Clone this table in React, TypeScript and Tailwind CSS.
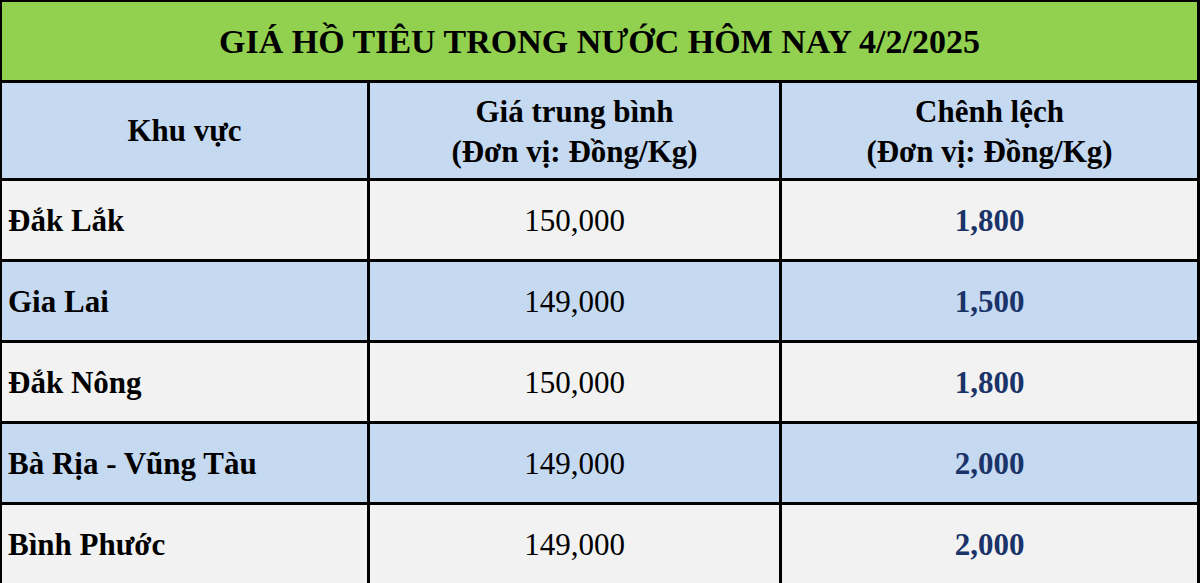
const ROWS = [
  { region: "Đắk Lắk", price: "150,000", diff: "1,800" },
  { region: "Gia Lai", price: "149,000", diff: "1,500" },
  { region: "Đắk Nông", price: "150,000", diff: "1,800" },
  { region: "Bà Rịa - Vũng Tàu", price: "149,000", diff: "2,000" },
  { region: "Bình Phước", price: "149,000", diff: "2,000" },
];

export default function App() {
  return (
    <div
      className="w-[1200px] h-[583px] overflow-hidden bg-black pt-[2px] pl-[2px] pr-[3px] text-black"
      style={{ fontFamily: '"Liberation Serif", "Times New Roman", serif' }}
    >
      <div className="flex flex-col gap-[3px]">
        <div className="h-[78px] bg-[#92d050] flex items-center justify-center text-[34px] font-bold">
          GIÁ HỒ TIÊU TRONG NƯỚC HÔM NAY 4/2/2025
        </div>
        <div className="grid grid-cols-[365px_409px_1fr] gap-[3px] h-[95px] text-[31px] font-bold leading-[40px]">
          <div className="bg-[#c5d9f1] flex items-center justify-center">Khu vực</div>
          <div className="bg-[#c5d9f1] flex flex-col items-center justify-center pt-[3px]">
            <span>Giá trung bình</span>
            <span>(Đơn vị: Đồng/Kg)</span>
          </div>
          <div className="bg-[#c5d9f1] flex flex-col items-center justify-center pt-[3px]">
            <span>Chênh lệch</span>
            <span>(Đơn vị: Đồng/Kg)</span>
          </div>
        </div>
        {ROWS.map((row, i) => {
          const bg = i % 2 === 0 ? "bg-[#f2f2f2]" : "bg-[#c5d9f1]";
          return (
            <div key={row.region} className="grid grid-cols-[365px_409px_1fr] gap-[3px] h-[78px] text-[31px]">
              <div className={`${bg} flex items-center pl-[6px] pt-[3px] font-bold`}>{row.region}</div>
              <div className={`${bg} flex items-center justify-center pt-[3px]`}>{row.price}</div>
              <div className={`${bg} flex items-center justify-center pt-[3px] font-bold text-[#1a3368]`}>
                {row.diff}
              </div>
            </div>
          );
        })}
      </div>
    </div>
  );
}
